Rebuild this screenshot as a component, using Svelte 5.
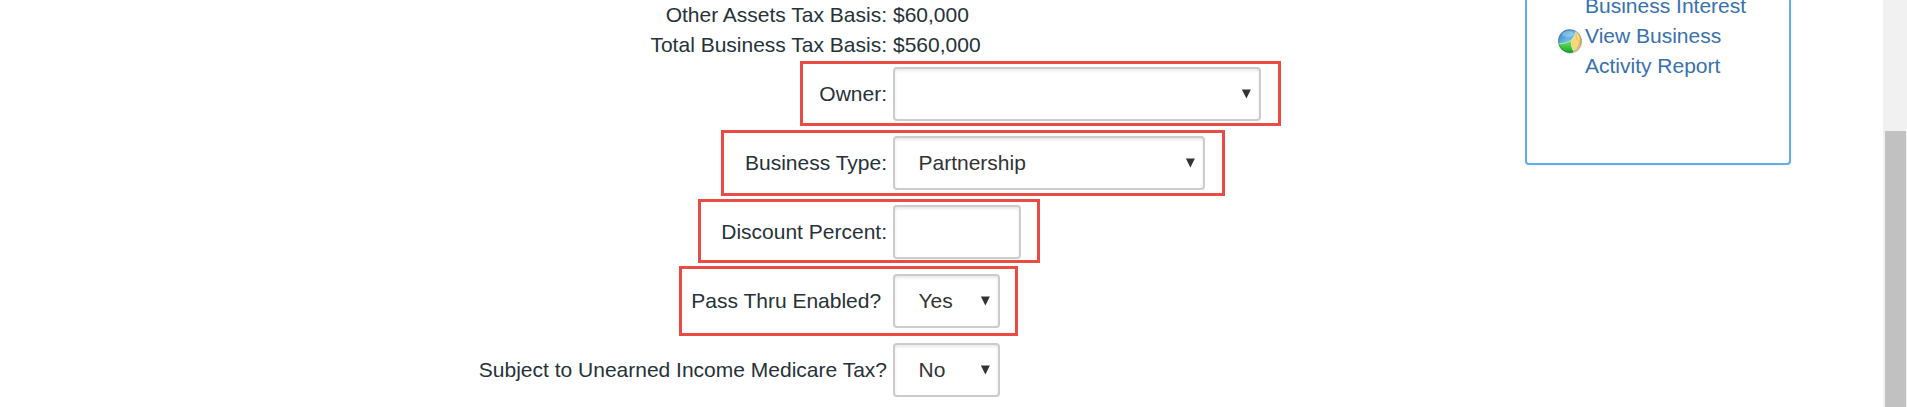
<script>
  const totals = [
    { label: 'Other Assets Tax Basis:', value: '$60,000' },
    { label: 'Total Business Tax Basis:', value: '$560,000' }
  ];
  const fields = [
    { label: 'Owner:', kind: 'select', value: '', width: 368, mark: 'owner' },
    { label: 'Business Type:', kind: 'select', value: 'Partnership', width: 312, mark: 'type' },
    { label: 'Discount Percent:', kind: 'input', value: '', width: 128, mark: 'discount' },
    { label: 'Pass Thru Enabled?\u00a0', kind: 'select', value: 'Yes', width: 107, mark: 'pass' },
    { label: 'Subject to Unearned Income Medicare Tax?', kind: 'select', value: 'No', width: 107, mark: '' }
  ];
</script>

<div class="page">
  <main class="form">
    {#each totals as t}
      <div class="total">
        <span class="label">{t.label}</span>
        <span>{t.value}</span>
      </div>
    {/each}
    {#each fields as f}
      <div class="row">
        <span class="label">{f.label}</span>
        <div class="control" style="width: {f.width}px">
          <span>{f.value}</span>
          {#if f.kind === 'select'}
            <svg class="arrow" width="10" height="10" viewBox="0 0 10 10"><path d="M.9 .5H9.9L5.4 9.5Z" fill="#333" /></svg>
          {/if}
        </div>
        {#if f.mark}<div class="mark {f.mark}"></div>{/if}
      </div>
    {/each}
  </main>

  <aside class="panel">
    <div class="item"><span class="slot"></span><a class="link">Business Interest</a></div>
    <div class="item">
      <span class="slot">
        <svg width="25" height="25" viewBox="0 0 25 25">
          <defs>
            <clipPath id="disc"><circle cx="11.8" cy="12" r="11.7" /></clipPath>
            <linearGradient id="blue" x1="0" y1="0" x2="1" y2="1">
              <stop offset="0" stop-color="#2f7fb8" /><stop offset=".4" stop-color="#6bb6ea" /><stop offset="1" stop-color="#3b92d2" />
            </linearGradient>
            <linearGradient id="green" x1="0" y1="0" x2="0" y2="1">
              <stop offset="0" stop-color="#7fdc70" /><stop offset=".6" stop-color="#30c235" /><stop offset="1" stop-color="#1b9428" />
            </linearGradient>
            <linearGradient id="gold" x1="0" y1="0" x2="1" y2="0">
              <stop offset="0" stop-color="#f6d36b" /><stop offset=".6" stop-color="#fbdc86" /><stop offset="1" stop-color="#dba746" />
            </linearGradient>
            <radialGradient id="rim"><stop offset=".84" stop-color="#234" stop-opacity="0" /><stop offset="1" stop-color="#234" stop-opacity=".35" /></radialGradient>
          </defs>
          <circle cx="12.4" cy="12.9" r="11.8" fill="#777" opacity=".3" />
          <g clip-path="url(#disc)">
            <rect width="25" height="25" fill="url(#blue)" />
            <path d="M0 15Q7 15 13 11.5Q13 19 17.5 25H0Z" fill="url(#green)" />
            <path d="M18.6 1Q17 7 13 11.5Q13 19 17 25H25V0Z" fill="url(#gold)" />
            <path d="M0 15Q7 15 13 11.5Q17 7 18.6 1M13 11.5Q13 19 17 25" stroke="#dff1cf" stroke-width=".7" fill="none" />
            <path d="M18 5L18.5 10L22 13L19 19" stroke="#d3a956" stroke-width=".6" fill="none" />
            <ellipse cx="10" cy="5" rx="6" ry="3" fill="#fff" opacity=".25" />
            <circle cx="11.8" cy="12" r="11.8" fill="url(#rim)" />
          </g>
        </svg>
      </span>
      <a class="link">View Business<br />Activity Report</a>
    </div>
  </aside>

  <div class="scrollbar"><div class="thumb"></div></div>
</div>

<style>
  :global(body) { background: #fff; overflow: hidden; }
  .page {
    box-sizing: border-box;
    display: flex;
    width: 1907px;
    height: 407px;
    overflow: hidden;
    background: #fff;
    color: #263238;
    font: 21px/30px "Liberation Sans", Arial, sans-serif;
  }
  .form { width: 1525px; flex: none; }
  .total, .row { display: flex; gap: 6px; }
  .total { height: 30px; }
  .row { position: relative; box-sizing: border-box; height: 69px; padding: 7px 0 8px; align-items: center; }
  .label { width: 887px; text-align: right; white-space: pre; flex: none; }
  .control {
    box-sizing: border-box;
    height: 54px;
    display: flex;
    align-items: center;
    justify-content: space-between;
    padding: 0 8px 0 23.5px;
    border: 2px solid #ccc;
    border-radius: 4px;
    box-shadow: inset 0 2px 3px rgba(0, 0, 0, .09);
    color: #333;
  }
  .arrow { display: block; flex: none; }
  .mark { position: absolute; box-sizing: border-box; border: 3px solid #e94b45; }
  .owner { left: 800px; top: 1px; width: 481px; height: 65px; }
  .type { left: 721px; top: 1px; width: 504px; height: 66px; }
  .discount { left: 698px; top: 1px; width: 342px; height: 64px; }
  .pass { left: 679px; top: -1px; width: 339px; height: 70px; }
  .panel {
    box-sizing: border-box;
    width: 266px;
    height: 165px;
    flex: none;
    padding-left: 31px;
    border: 2px solid #62ade8;
    border-top: 0;
    border-radius: 0 0 4px 4px;
    box-shadow: 0 1px 3px rgba(0, 0, 0, .05);
  }
  .item { display: flex; }
  .item:first-child { margin-top: -9px; }
  .slot { width: 27px; flex: none; padding-top: 8px; box-sizing: border-box; line-height: 0; }
  .link { color: #3871ad; white-space: nowrap; }
  .scrollbar {
    box-sizing: border-box;
    width: 24px;
    height: 407px;
    flex: none;
    margin-left: auto;
    padding: 131px 1px 0 2px;
    background: #f1f1f1;
  }
  .thumb { height: 276px; background: #c1c1c1; }
</style>
